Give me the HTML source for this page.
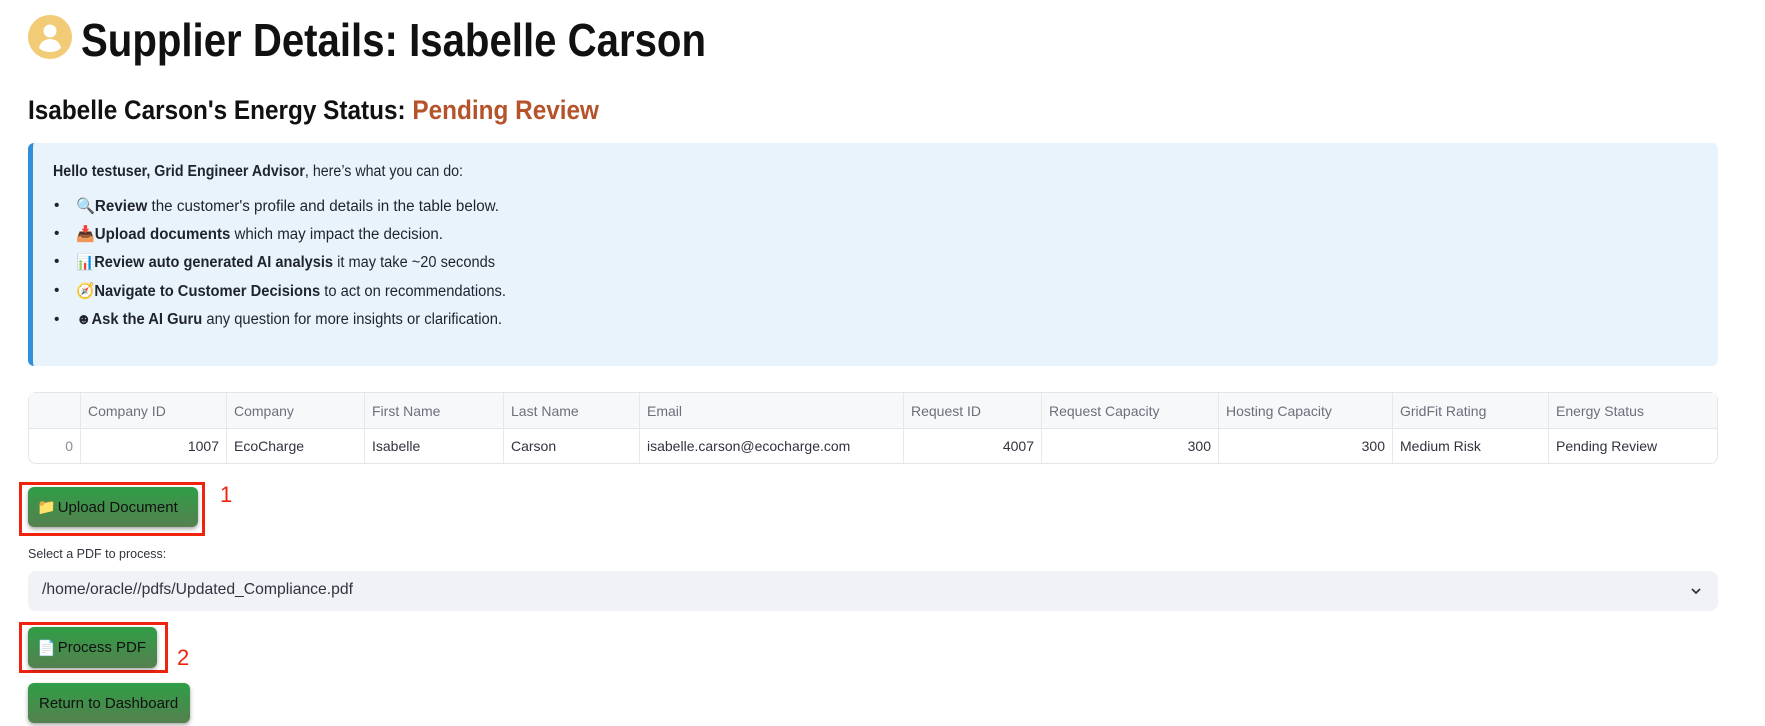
<!DOCTYPE html>
<html><head><meta charset="utf-8">
<style>
*{margin:0;padding:0;box-sizing:border-box}
body{width:1765px;height:726px;overflow:hidden;background:#fff;font-family:"Liberation Sans",sans-serif;color:#31333f;position:relative}
.a{position:absolute;white-space:nowrap}
.fit{display:inline-block;transform-origin:0 50%}
.btn{position:absolute;background:linear-gradient(#2f9e46,#55804f);border-radius:6px;box-shadow:0 2px 4px rgba(0,0,0,.35);color:#111;font-size:15px;display:flex;align-items:center;padding-left:9px}
.red{position:absolute;border:3px solid #f0230f}
.num{position:absolute;color:#f0230f;font-size:22px}
table{position:absolute;left:28px;top:392px;width:1690px;border-collapse:separate;border-spacing:0;border:1px solid #e3e5ea;border-radius:8px;font-size:14px;color:#31333f;table-layout:fixed}
td{border-right:1px solid #e6e8ec;padding:0 7px;white-space:nowrap;overflow:hidden}
td:last-child{border-right:none}
tr.h td{height:36px;background:#f7f8fa;color:#6b6f7a;border-bottom:1px solid #e3e5ea}
tr.b td{height:34px}
.r{text-align:right}
</style></head><body>
<svg class="a" style="left:28px;top:15px" width="44" height="44" viewBox="0 0 44 44"><circle cx="22" cy="22" r="22" fill="#f1cb75"/><circle cx="22" cy="16" r="6.5" fill="#fff"/><path d="M11 33c1-6 6-9 11-9s10 3 11 9c-3 3-7 4-11 4s-8-1-11-4z" fill="#fff"/></svg>
<div class="a" style="left:81px;top:13px;font-size:46px;font-weight:bold;color:#111"><span class="fit" style="--w:625px">Supplier Details: Isabelle Carson</span></div>
<div class="a" style="left:28px;top:95px;font-size:27px;font-weight:bold;color:#111"><span class="fit" style="--w:571px">Isabelle Carson's Energy Status: <span style="color:#b5532b">Pending Review</span></span></div>

<div class="a" style="left:28px;top:143px;width:1690px;height:223px;background:#e9f3fc;border-left:5px solid #2f8fdb;border-radius:6px"></div>
<div class="a" style="left:53px;top:163px;font-size:15.5px;color:#1f2330"><span class="fit" style="--w:410px"><b>Hello testuser, Grid Engineer Advisor</b>, here’s what you can do:</span></div>
<div class="a" style="left:54px;top:197px;font-size:15.5px;color:#1f2330">•</div>
<div class="a" style="left:54px;top:225px;font-size:15.5px;color:#1f2330">•</div>
<div class="a" style="left:54px;top:253px;font-size:15.5px;color:#1f2330">•</div>
<div class="a" style="left:54px;top:282px;font-size:15.5px;color:#1f2330">•</div>
<div class="a" style="left:54px;top:311px;font-size:15.5px;color:#1f2330">•</div>
<div class="a" style="left:76px;top:197px;font-size:15.5px;color:#1f2330"><span class="fit" style="--w:423px">🔍<b>Review</b> the customer's profile and details in the table below.</span></div>
<div class="a" style="left:76px;top:225px;font-size:15.5px;color:#1f2330"><span class="fit" style="--w:367px">📥<b>Upload documents</b> which may impact the decision.</span></div>
<div class="a" style="left:76px;top:253px;font-size:15.5px;color:#1f2330"><span class="fit" style="--w:419px">📊<b>Review auto generated AI analysis</b> it may take ~20 seconds</span></div>
<div class="a" style="left:76px;top:282px;font-size:15.5px;color:#1f2330"><span class="fit" style="--w:430px">🧭<b>Navigate to Customer Decisions</b> to act on recommendations.</span></div>
<div class="a" style="left:76px;top:311px;font-size:15.5px;color:#1f2330"><span class="fit" style="--w:426px">☻<b>Ask the AI Guru</b> any question for more insights or clarification.</span></div>

<table>
<colgroup><col style="width:52px"><col style="width:146px"><col style="width:138px"><col style="width:139px"><col style="width:136px"><col style="width:264px"><col style="width:138px"><col style="width:177px"><col style="width:174px"><col style="width:156px"><col></colgroup>
<tr class="h"><td></td><td>Company ID</td><td>Company</td><td>First Name</td><td>Last Name</td><td>Email</td><td>Request ID</td><td>Request Capacity</td><td>Hosting Capacity</td><td>GridFit Rating</td><td>Energy Status</td></tr>
<tr class="b"><td class="r" style="color:#8a8d96">0</td><td class="r">1007</td><td>EcoCharge</td><td>Isabelle</td><td>Carson</td><td>isabelle.carson@ecocharge.com</td><td class="r">4007</td><td class="r">300</td><td class="r">300</td><td>Medium Risk</td><td>Pending Review</td></tr>
</table>

<div class="red" style="left:19px;top:482px;width:186px;height:54px"></div>
<div class="btn" style="left:28px;top:487px;width:170px;height:40px">📁<span style="margin-left:2px">Upload Document</span></div>
<div class="num" style="left:220px;top:482px">1</div>

<div class="a" style="left:28px;top:547px;font-size:12.5px;color:#31333f">Select a PDF to process:</div>
<div class="a" style="left:28px;top:571px;width:1690px;height:40px;background:#f0f2f6;border-radius:8px"></div>
<div class="a" style="left:42px;top:581px;font-size:16px;color:#31333f"><span class="fit" style="--w:311px">/home/oracle//pdfs/Updated_Compliance.pdf</span></div>
<svg class="a" style="left:1690px;top:586px" width="12" height="10" viewBox="0 0 12 10"><path d="M2 3l4 4 4-4" stroke="#31333f" stroke-width="1.8" fill="none"/></svg>

<div class="red" style="left:19px;top:622px;width:149px;height:51px"></div>
<div class="btn" style="left:28px;top:627px;width:129px;height:41px">📄<span style="margin-left:2px">Process PDF</span></div>
<div class="num" style="left:177px;top:645px">2</div>

<div class="btn" style="left:28px;top:683px;width:162px;height:40px;padding-left:11px">Return to Dashboard</div>

<script>
document.querySelectorAll('.fit').forEach(function(e){
 var w=parseFloat(getComputedStyle(e).getPropertyValue('--w'));
 var r=e.getBoundingClientRect().width;
 if(w&&r) e.style.transform='scaleX('+(w/r)+')';
});
</script>
</body></html>
